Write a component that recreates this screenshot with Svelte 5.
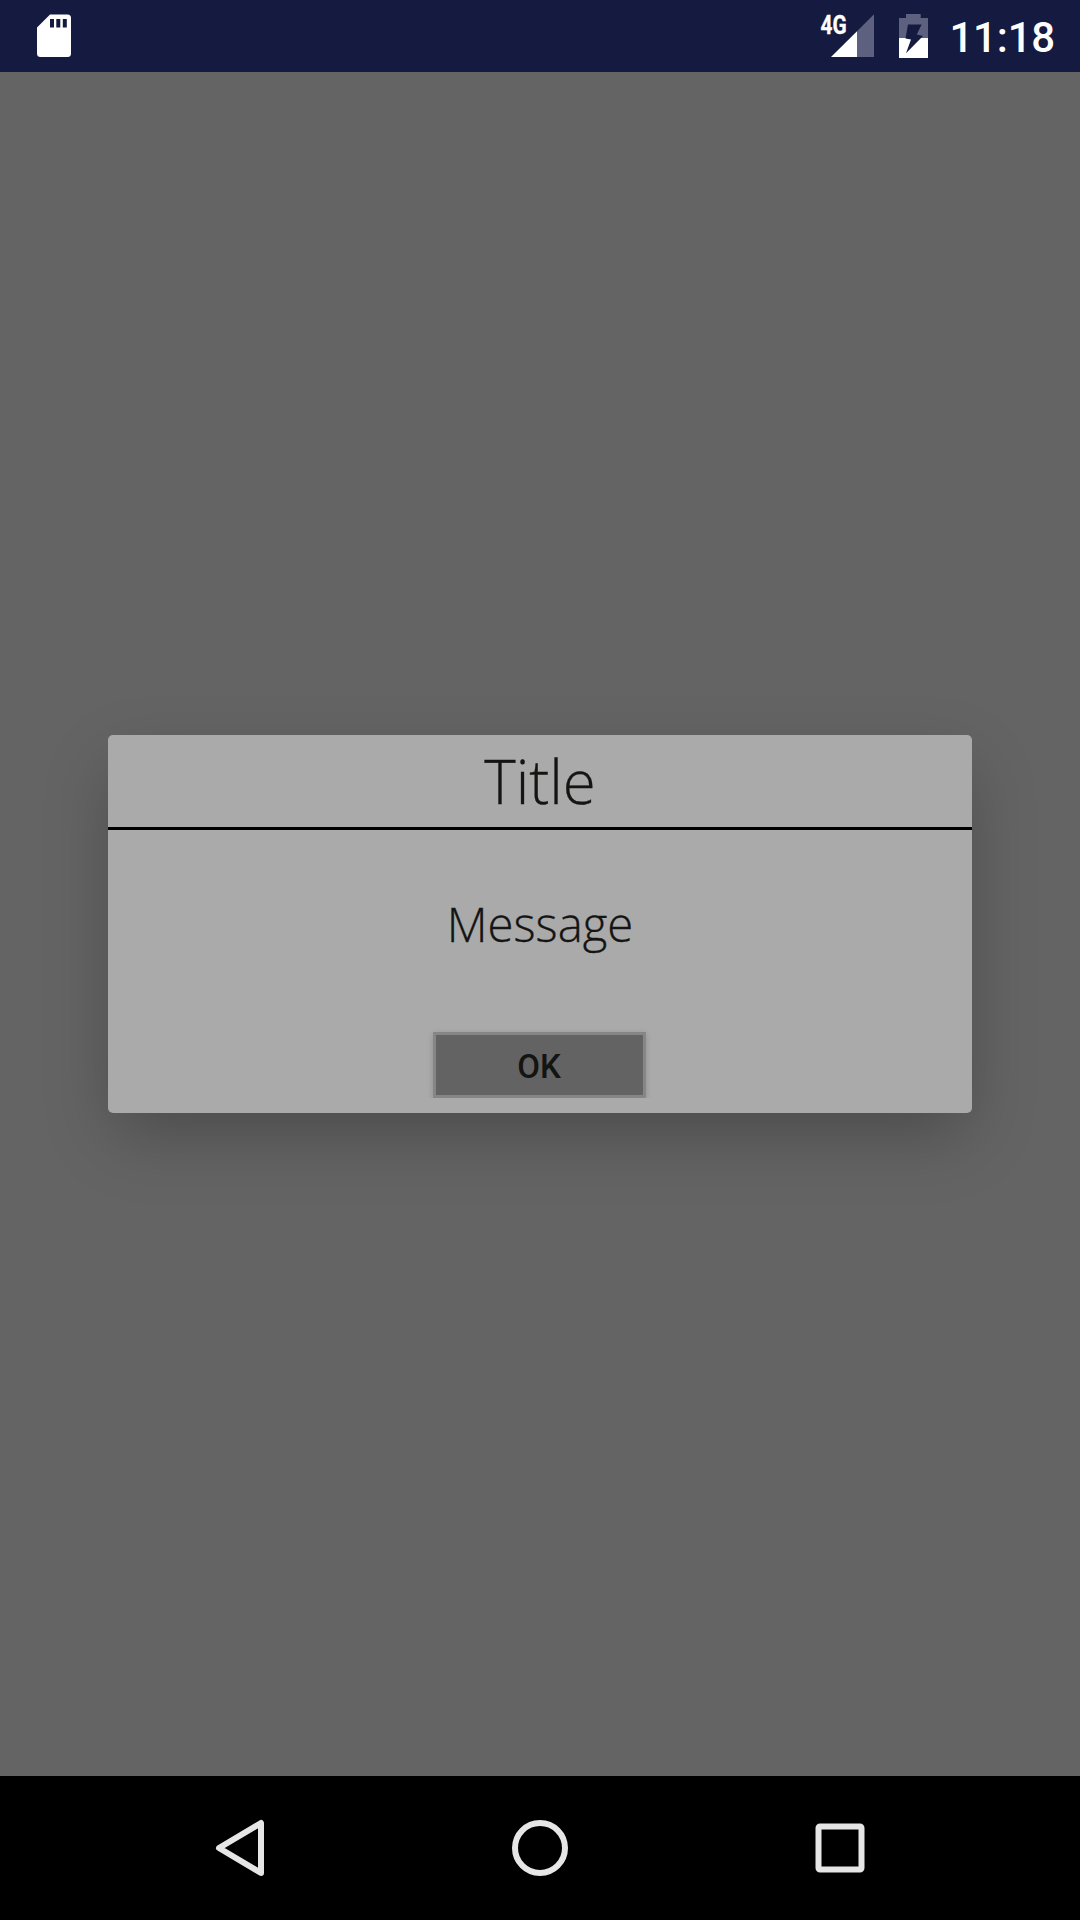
<script>
  let title = 'Title';
  let message = 'Message';
  let time = '11:18';
</script>

<div class="screen">
  <header class="status">
    <svg class="sd" width="36" height="44" viewBox="36 14 36 44">
      <path fill="#fff" fill-rule="evenodd" d="M50 14.5H67.5Q71 14.5 71 18V53.5Q71 57 67.5 57H40.500Q37 57 37 53.500V27.500ZM50 19V27.500H54V19ZM56.300 19V27.500H60.300V19ZM62.800 19V27.500H66.800V19Z" />
    </svg>
    <svg class="signals" width="112" height="48" viewBox="818 12 112 48">
      <text class="network" transform="translate(820.6 33.500) scale(.8 1)">4G</text>
      <path fill="#5e6080" d="M857 31.200L874 14.200V57H857Z" />
      <path fill="#fff" d="M831 57L857 31.200V57Z" />
      <path fill="#5e6080" d="M906 14H920.700V18H928V38H899V18H906Z" />
      <path fill="#fff" d="M899 38H928V58H899Z" />
      <path fill="#151a40" d="M908 24.500H921.600L916.800 34.600L923 36L906 53.300L911 39.600L905.500 38.500Z" />
    </svg>
    <span class="time">{time}</span>
  </header>

  <main>
    <section class="dialog">
      <h1>{title}</h1>
      <p>{message}</p>
      <button>OK</button>
    </section>
  </main>

  <nav>
    <svg width="60" height="60" viewBox="210 1818 60 60">
      <path d="M219 1848L261 1823V1873Z" />
    </svg>
    <svg width="60" height="60" viewBox="510 1818 60 60">
      <circle cx="540" cy="1848" r="25" />
    </svg>
    <svg width="60" height="60" viewBox="810 1818 60 60">
      <rect x="818.500" y="1826.500" width="43" height="43" rx="1.500" />
    </svg>
  </nav>
</div>

<style>
  :global(body) {
    margin: 0;
  }
  .screen {
    width: 1080px;
    height: 1920px;
    display: flex;
    flex-direction: column;
    background: #646464;
    overflow: hidden;
  }
  .status {
    height: 72px;
    box-sizing: border-box;
    padding: 0 25px 0 36px;
    display: flex;
    align-items: center;
    background: #151a40;
    color: #fff;
    font-family: Roboto, sans-serif;
  }
  .signals {
    margin-left: auto;
    overflow: visible;
  }
  .network {
    font: 700 26px Roboto, sans-serif;
    fill: #fff;
    stroke: #fff;
    stroke-width: 0.4;
  }
  .time {
    margin-left: 19px;
    font-size: 42px;
    font-weight: 500;
    letter-spacing: -0.2px;
    line-height: 48px;
    padding-top: 4px;
  }
  main {
    flex: 1;
    display: flex;
    justify-content: center;
    align-items: center;
  }
  .dialog {
    width: 864px;
    height: 378px;
    border-radius: 5px;
    background: #aaa;
    color: #141413;
    box-shadow: 0 26px 64px -7px rgba(0, 0, 0, 0.26);
    display: flex;
    flex-direction: column;
    align-items: center;
  }
  h1,
  p {
    -webkit-text-stroke: 0.3px #141413;
  }
  h1 {
    box-sizing: border-box;
    width: 100%;
    height: 95px;
    margin: 0;
    border-bottom: 3px solid #000;
    text-align: center;
    font: 300 60px/93px 'Open Sans', sans-serif;
  }
  p {
    margin: 0;
    height: 202px;
    font: 300 47.3px/187px 'Open Sans', sans-serif;
  }
  button {
    box-sizing: border-box;
    width: 213px;
    height: 66px;
    margin: 0 1px 0 0;
    padding: 3px 1px 0 0;
    border: 3px solid #868686;
    background: #636363;
    color: #141413;
    font: 500 33px/57px Roboto, sans-serif;
    box-shadow: 0 2px 6px rgba(0, 0, 0, 0.16);
    clip-path: inset(-8px -8px 0 -8px);
  }
  nav {
    height: 144px;
    display: flex;
    justify-content: center;
    align-items: center;
    gap: 240px;
    background: #000;
  }
  nav svg {
    fill: none;
    stroke: #e6e6e6;
    stroke-width: 6;
    stroke-linejoin: round;
  }
</style>
